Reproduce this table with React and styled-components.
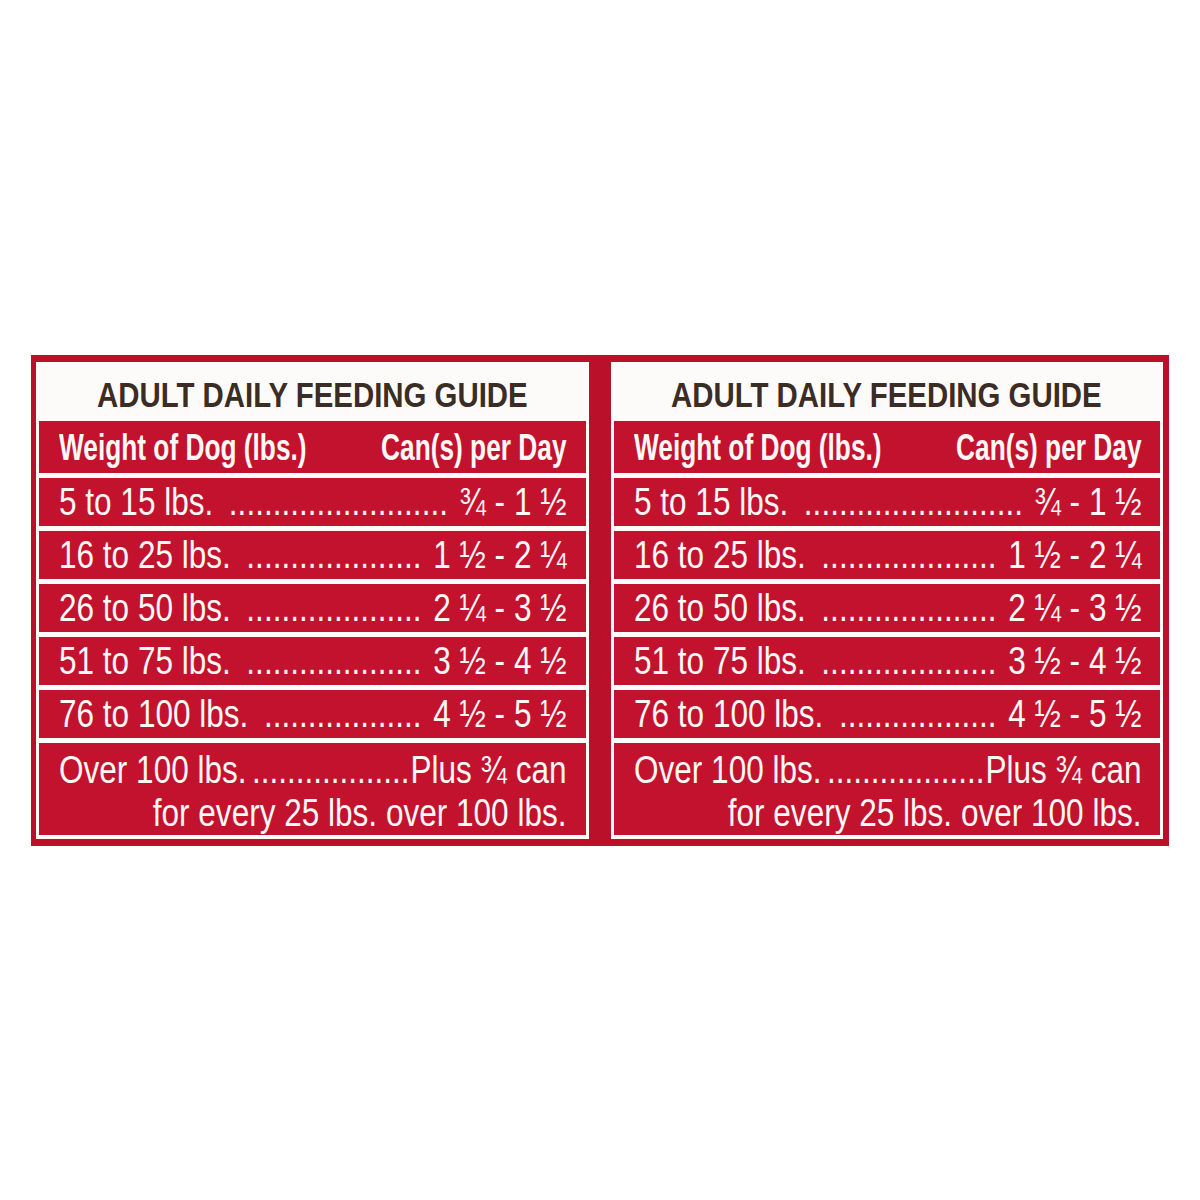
import React from "react";
import styled, { createGlobalStyle } from "styled-components";

const Global = createGlobalStyle`
  html, body { margin: 0; padding: 0; background: #ffffff; }
  body { font-family: "Liberation Sans", Arial, sans-serif; overflow: hidden; }
`;

const Page = styled.div`
  padding: 355px 31px 0;
  width: 1138px;
`;

const Band = styled.div`
  display: grid;
  grid-template-columns: repeat(2, minmax(0, 1fr));
  column-gap: 22px;
  padding: 7px 6px 7px 5px;
  background: #bb1029;
`;

const Panel = styled.section`
  background: #fcfbfa;
  padding: 0 3px 4px;
  display: flex;
  flex-direction: column;
  gap: 5px;
  min-width: 0;
`;

const Title = styled.h2`
  margin: 0;
  height: 54px;
  box-sizing: border-box;
  padding-top: 12px;
  display: flex;
  justify-content: center;
  font-family: "Liberation Sans", Arial, sans-serif;
  font-weight: 700;
  font-size: 35px;
  line-height: 42px;
  color: #3b2c25;
`;

const TitleText = styled.span`
  display: inline-block;
  white-space: nowrap;
  transform: scaleX(0.84);
  transform-origin: center;
`;

const RowBase = styled.div`
  background: #c3122e;
  color: #fdf7f6;
  box-sizing: border-box;
  padding: 0 19px 0 20px;
  line-height: 1;
  min-width: 0;
`;

const HeaderRow = styled(RowBase)`
  height: 52px;
  font-weight: 700;
  font-size: 37px;
`;

const Row = styled(RowBase)`
  height: 48px;
  font-size: 38px;
`;

const LastRow = styled(RowBase)`
  height: 92px;
  padding-top: 8px;
  font-size: 38px;
`;

/* Lays the line out at full width, then narrows it to mimic a condensed face */
const Squeeze = styled.div`
  width: calc(100% / ${(p) => p.$s});
  height: 100%;
  transform: scaleX(${(p) => p.$s});
  transform-origin: left center;
  display: flex;
  flex-direction: ${(p) => (p.$column ? "column" : "row")};
  align-items: ${(p) => (p.$column ? "stretch" : "center")};
  justify-content: ${(p) => (p.$between ? "space-between" : "flex-start")};
  gap: ${(p) => (p.$column ? "5px" : "0")};
`;

const Line = styled.div`
  display: flex;
  align-items: center;
  justify-content: ${(p) => (p.$right ? "flex-end" : "flex-start")};
`;

const Cell = styled.span`
  white-space: nowrap;
  flex: none;
`;

const Leader = styled.span`
  flex: 1;
  white-space: nowrap;
  margin: 0 ${(p) => p.$gapRight ?? 14}px 0 ${(p) => p.$gapLeft ?? 14}px;
  text-align: right;
`;

const S = 0.83;
const dots = (n) => ".".repeat(n);

const rows = [
  ["5 to 15 lbs.", "¾ - 1 ½", 25],
  ["16 to 25 lbs.", "1 ½ - 2 ¼", 20],
  ["26 to 50 lbs.", "2 ¼ - 3 ½", 20],
  ["51 to 75 lbs.", "3 ½ - 4 ½", 20],
  ["76 to 100 lbs.", "4 ½ - 5 ½", 18],
];

function Guide() {
  return (
    <Panel>
      <Title>
        <TitleText>ADULT DAILY FEEDING GUIDE</TitleText>
      </Title>
      <HeaderRow>
        <Squeeze $s={0.71} $between>
          <Cell>Weight of Dog (lbs.)</Cell>
          <Cell>Can(s) per Day</Cell>
        </Squeeze>
      </HeaderRow>
      {rows.map(([w, c, n]) => (
        <Row key={w}>
          <Squeeze $s={S}>
            <Cell>{w}</Cell>
            <Leader>{dots(n)}</Leader>
            <Cell>{c}</Cell>
          </Squeeze>
        </Row>
      ))}
      <LastRow>
        <Squeeze $s={S} $column>
          <Line>
            <Cell>Over 100 lbs.</Cell>
            <Leader $gapLeft={4} $gapRight={1}>{dots(18)}</Leader>
            <Cell>Plus ¾ can</Cell>
          </Line>
          <Line $right>
            <Cell>for every 25 lbs. over 100 lbs.</Cell>
          </Line>
        </Squeeze>
      </LastRow>
    </Panel>
  );
}

export default function App() {
  return (
    <>
      <Global />
      <Page>
        <Band>
          <Guide />
          <Guide />
        </Band>
      </Page>
    </>
  );
}
